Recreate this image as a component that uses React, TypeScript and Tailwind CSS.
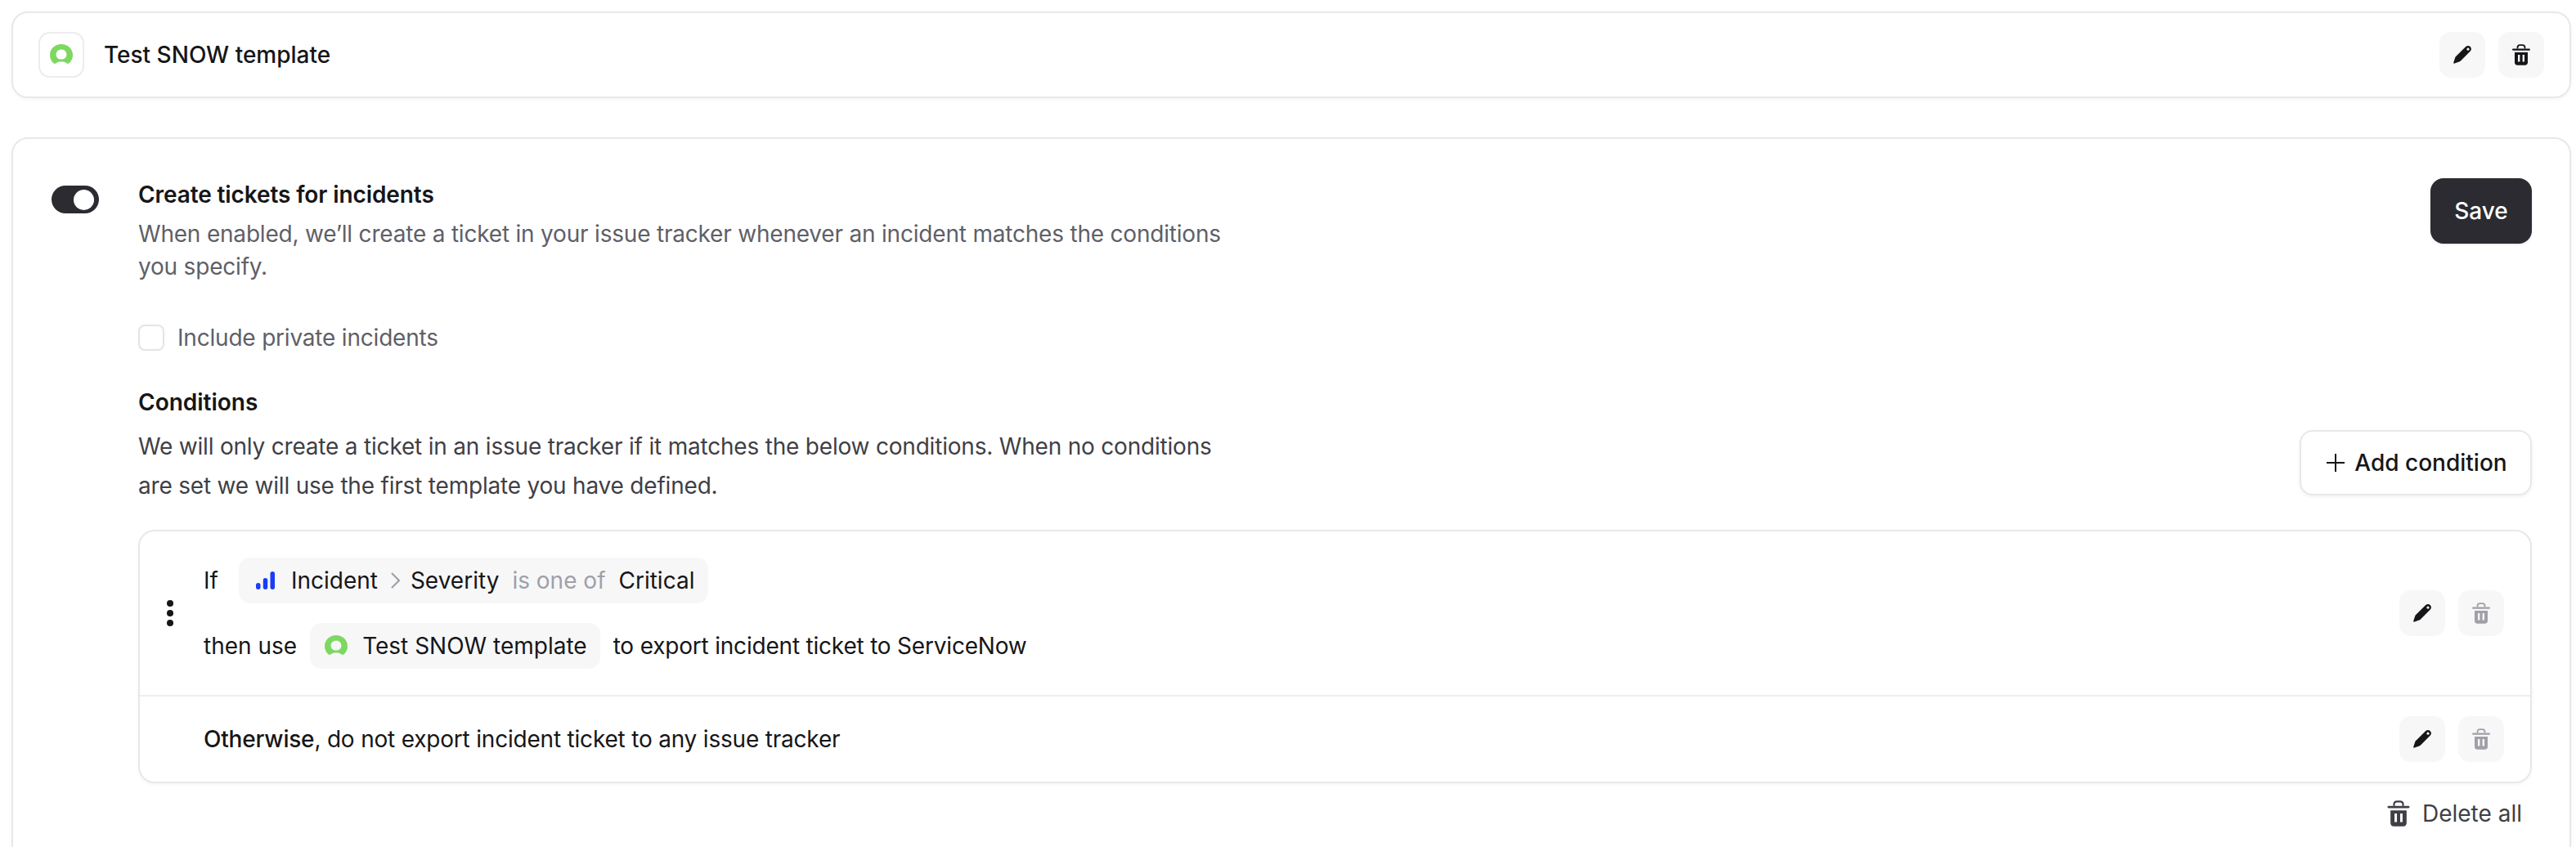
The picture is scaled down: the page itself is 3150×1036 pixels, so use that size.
import React from "react";

function PencilIcon({ className = "" }: { className?: string }) {
  return (
    <svg viewBox="0 0 22 22" className={className} fill="currentColor">
      <path
        fillRule="evenodd"
        d="M15 1.2C16.8-.3 19.4-.2 20.8 1.2 22.3 2.7 22.3 5 20.8 6.6L9.2 18.2C8.6 18.8 7.9 19.2 7.2 19.5L1.6 21.6C.7 21.9 0 21.2.3 20.3L2.2 14.6C2.4 13.9 2.8 13.2 3.4 12.7ZM18 2.6a1.6 1.6 0 1 0 .01 0Z"
      />
    </svg>
  );
}

function TrashIcon({ className = "" }: { className?: string }) {
  return (
    <svg viewBox="0 0 22 26" className={className} fill="currentColor">
      <path d="M6.5 5.5V4.2C6.5 2.4 7.8 1.2 9.5 1.2H12.5C14.2 1.2 15.5 2.4 15.5 4.2V5.5" fill="none" stroke="currentColor" strokeWidth="1.8" />
      <rect x="0" y="5.4" width="22" height="2.4" rx="1.2" />
      <path
        fillRule="evenodd"
        d="M3 10H19V22.5C19 24.4 17.6 25.8 15.6 25.8H6.4C4.4 25.8 3 24.4 3 22.5ZM7 13V21.5H9.4V13ZM12.6 13V21.5H15V13Z"
      />
    </svg>
  );
}

function SnowLogo({ className = "" }: { className?: string }) {
  return (
    <svg viewBox="0 0 28 26" className={className} fill="#7dd862">
      <path
        fillRule="evenodd"
        d="M14 0C21.8 0 28 5.9 28 13.2 28 17.2 26.4 20.6 23.6 23.2 22.8 24 21.6 24.1 20.7 23.4 18.8 22 16.6 21.2 14 21.2 11.4 21.2 9.2 22 7.3 23.4 6.4 24.1 5.2 24 4.4 23.2 1.6 20.6 0 17.2 0 13.2 0 5.9 6.2 0 14 0ZM14 6.4C10.4 6.4 7.6 9.2 7.6 12.7 7.6 16.2 10.4 18.6 14 18.6 17.6 18.6 20.4 16.2 20.4 12.7 20.4 9.2 17.6 6.4 14 6.4Z"
      />
    </svg>
  );
}

function SeverityIcon() {
  return (
    <svg viewBox="0 0 23 22" className="h-[22px] w-[23px]" fill="#1a3cf5">
      <rect x="0" y="14" width="5.5" height="8" rx="2.75" />
      <rect x="8.75" y="8" width="5.5" height="14" rx="2.75" />
      <rect x="17.5" y="0" width="5.5" height="22" rx="2.75" />
    </svg>
  );
}

function IconButton({ children }: { children: React.ReactNode }) {
  return (
    <button className="flex h-14 w-14 items-center justify-center rounded-[14px] bg-[#f7f7f8]">
      {children}
    </button>
  );
}

function RowActions({ muted = false }: { muted?: boolean }) {
  return (
    <div className="flex gap-4">
      <IconButton>
        <PencilIcon className="h-[22px] w-[22px] text-[#161618]" />
      </IconButton>
      <IconButton>
        <TrashIcon className={muted ? "h-[26px] w-[22px] text-[#a0a0a8]" : "h-[26px] w-[22px] text-[#161618]"} />
      </IconButton>
    </div>
  );
}

export default function App() {
  return (
    <div className="h-[1036px] overflow-hidden bg-white pt-[14px] pr-[6px] pl-[14px] font-[Inter,sans-serif] text-[28px] tracking-[-0.2px] text-[#161618]">
      <div className="flex h-[106px] items-center justify-between rounded-[20px] border-2 border-[#e8e8e8] pr-[31px] pl-[31px] shadow-[0_2px_4px_rgba(0,0,0,0.04)]">
        <div className="flex items-center gap-6">
          <div className="flex h-14 w-14 items-center justify-center rounded-[14px] border-2 border-[#ececec]">
            <SnowLogo className="h-[26px] w-7" />
          </div>
          <span className="font-medium tracking-normal">Test SNOW template</span>
        </div>
        <RowActions />
      </div>

      <div className="mt-12 rounded-[20px] border-2 border-[#e8e8e8] pt-12 pr-[46px] pb-10 pl-[47px] shadow-[0_2px_4px_rgba(0,0,0,0.04)]">
        <div className="flex">
          <div className="mt-[9px] flex h-[34px] w-[58px] items-center justify-end rounded-full bg-[#2b2b31] pr-1.5">
            <div className="h-[25px] w-[25px] rounded-full bg-white" />
          </div>
          <div className="ml-12 flex-1">
            <div className="flex items-start justify-between">
              <div className="w-[1360px]">
                <div className="leading-10 font-semibold tracking-[-0.1px]">Create tickets for incidents</div>
                <p className="mt-2 leading-10 text-[#5f5f68]">
                  When enabled, we’ll create a ticket in your issue tracker whenever an incident matches the conditions you specify.
                </p>
              </div>
              <button className="h-20 w-[124px] rounded-2xl bg-[#2b2b31] font-medium tracking-normal text-white shadow-sm">
                Save
              </button>
            </div>

            <label className="mt-[46px] flex items-center gap-4 text-[#5f5f68]">
              <span className="h-8 w-8 rounded-lg border-2 border-[#e4e4e7] bg-white" />
              Include private incidents
            </label>

            <div className="mt-[38px] leading-10 font-semibold tracking-normal">Conditions</div>
            <div className="flex items-start justify-between">
              <p className="mt-2.5 w-[1360px] leading-12 text-[#3f3f46]">
                We will only create a ticket in an issue tracker if it matches the below conditions. When no conditions are set we will use the first template you have defined.
              </p>
              <button className="mt-[14px] flex h-20 w-[284px] items-center justify-center gap-3 rounded-2xl border-2 border-[#e8e8e8] pl-[3px] font-medium tracking-normal shadow-[0_2px_4px_rgba(0,0,0,0.06)]">
                <svg viewBox="0 0 22 22" className="h-[22px] w-[22px]" fill="none" stroke="currentColor" strokeWidth="2">
                  <path d="M11 0V22M0 11H22" />
                </svg>
                Add condition
              </button>
            </div>

            <div className="mt-[30px] rounded-[20px] border-2 border-[#e8e8e8] shadow-[0_2px_4px_rgba(0,0,0,0.04)]">
              <div className="flex h-[202px] items-center border-b-2 border-[#eeeeee] pr-8">
                <div className="ml-[33px] flex w-[45px] flex-col gap-1">
                  <span className="h-2 w-2 rounded-full bg-[#161618]" />
                  <span className="h-2 w-2 rounded-full bg-[#161618]" />
                  <span className="h-2 w-2 rounded-full bg-[#161618]" />
                </div>
                <div className="flex flex-1 flex-col gap-6 tracking-normal">
                  <div className="flex items-center">
                    <span>If</span>
                    <div className="ml-[25px] flex h-14 items-center rounded-[14px] bg-[#f7f7f8] pr-[17px] pl-[21px]">
                      <SeverityIcon />
                      <span className="ml-5">Incident</span>
                      <svg viewBox="0 0 13 20" className="mr-3 ml-[15px] h-5 w-[13px]" fill="none" stroke="#a0a0a8" strokeWidth="2.2">
                        <path d="M2 1L11 10L2 19" />
                      </svg>
                      <span>Severity</span>
                      <span className="ml-4 text-[#a0a0a8]">is one of</span>
                      <span className="ml-4">Critical</span>
                    </div>
                  </div>
                  <div className="flex items-center">
                    <span>then use</span>
                    <div className="mx-4 flex h-14 items-center gap-[18px] rounded-[14px] bg-[#f7f7f8] pr-4 pl-[18px]">
                      <SnowLogo className="h-[26px] w-7" />
                      <span>Test SNOW template</span>
                    </div>
                    <span className="tracking-[-0.2px]">to export incident ticket to ServiceNow</span>
                  </div>
                </div>
                <RowActions muted />
              </div>
              <div className="flex h-[104px] items-center justify-between pr-8 pl-[78px]">
                <span>
                  <span className="font-medium">Otherwise</span>, do not export incident ticket to any issue tracker
                </span>
                <RowActions muted />
              </div>
            </div>

            <div className="mt-4 flex items-center justify-end gap-[15px] pr-3 tracking-normal text-[#3f3f46]">
              <TrashIcon className="h-8 w-7" />
              Delete all
            </div>
          </div>
        </div>
      </div>
    </div>
  );
}
